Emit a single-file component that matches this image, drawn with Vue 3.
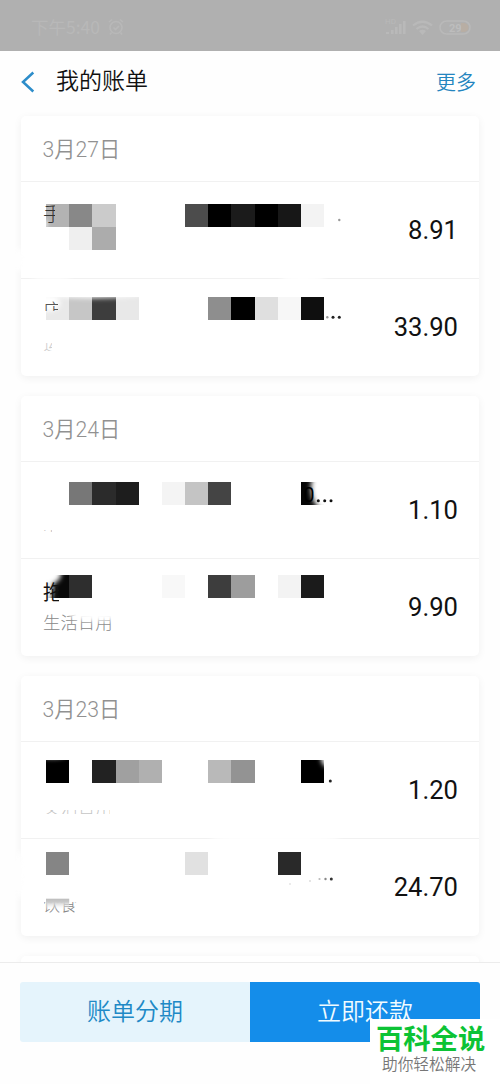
<script setup>
const C = 23.2
// Each tile: [x, y, shade]; coordinates share the page grid of the list.
const groups = [
  {
    date: '3月27日',
    rows: [
      {
        y: 181, amount: '8.91',
        tiles: [[46, 204, '#b3b3b3'], [69.2, 204, '#888'], [92.4, 204, '#cbcbcb'], [69.2, 227, '#efefef'], [92.4, 227, '#acacac'],
          [185, 204, '#4c4c4c'], [208.2, 204, '#000'], [231.4, 204, '#1b1b1b'], [254.6, 204, '#000'], [277.8, 204, '#171717'], [300.8, 204, '#f3f3f3']],
        fades: [[19, 260, 6, 12, '#fefefe'], [44, 224, 3, 4, '#fff']],
        dots: [[339.3, 220, 1.2, '#999']],
        texts: [{ t: '手', x: 43, y: 222, s: 20, c: '#333', clip: [43, 203, 12, 21] }],
      },
      {
        y: 278, amount: '33.90',
        tiles: [[46, 296.5, '#e9e9e9'], [69.2, 296.5, '#c6c6c6'], [92.4, 296.5, '#3d3d3d'], [115.6, 296.5, '#e8e8e8'],
          [208.2, 296.5, '#8e8e8e'], [231.4, 296.5, '#000'], [254.6, 296.5, '#dfdfdf'], [277.8, 296.5, '#f7f7f7'], [300.8, 296.5, '#0f0f0f']],
        fades: [[48, 303, 12, 8, '#fff'], [93, 293, 50, 5, '#fff'], [303, 277, 22, 5, '#fff'], [52, 277, 20, 3, '#fff']],
        dots: [[327.3, 317.3, 1.2, '#999'], [333, 317.3, 1.5, '#222'], [339.3, 317.3, 1.5, '#222']],
        texts: [{ t: '店', x: 43, y: 319, s: 20, c: '#555', clip: [43, 301, 15, 10] }, { t: '运', x: 43, y: 350, s: 17, c: '#ccc', clip: [43, 343, 9, 8] }],
      },
    ],
  },
  {
    date: '3月24日',
    rows: [
      {
        y: 461, amount: '1.10',
        tiles: [[69.2, 481.7, '#777'], [92.4, 481.7, '#2b2b2b'], [115.6, 481.7, '#1d1d1d'], [162, 481.7, '#f4f4f4'], [185, 481.7, '#c4c4c4'], [208.2, 481.7, '#444'], [300.8, 481.7, '#050505']],
        fades: [[325, 488, 14, 22, '#fff']],
        dots: [[318.3, 500.7, 1.5, '#111'], [324.7, 500.7, 1.5, '#111'], [331, 500.7, 1.5, '#111']],
        texts: [{ t: '0', x: 303.3, y: 501.5, s: 20, c: '#000', w: 400 }, { t: '生', x: 43, y: 538, s: 17, c: '#bbb', clip: [43, 530, 9, 2] }],
      },
      {
        y: 558, amount: '9.90',
        tiles: [[46, 574.5, '#090909'], [69.2, 574.5, '#2e2e2e'], [162, 574.5, '#f8f8f8'], [208.2, 574.5, '#3d3d3d'], [231.4, 574.5, '#9d9d9d'], [277.8, 574.5, '#f3f3f3'], [300.8, 574.5, '#1b1b1b']],
        fades: [[46, 574, 15, 11, '#fff'], [45, 590, 8, 14, '#fff']],
        under: { t: '生活日用', x: 43, y: 629, s: 17.4, c: '#888' },
        underFade: [97, 614, 28, 7],
        texts: [{ t: '拖', x: 43, y: 600, s: 20, c: '#111', w: 400, clip: [43, 580, 16, 23] }],
      },
    ],
  },
  {
    date: '3月23日',
    rows: [
      {
        y: 741, amount: '1.20',
        tiles: [[46, 759.5, '#000'], [92.4, 759.5, '#222'], [115.6, 759.5, '#a0a0a0'], [138.8, 759.5, '#b0b0b0'], [208.2, 759.5, '#b9b9b9'], [231.4, 759.5, '#939393'], [300.8, 759.5, '#000']],
        fades: [[328, 758, 7, 9, '#fff'], [52, 755, 14, 3, '#fff']],
        dots: [[330.3, 781, 1.5, '#222']],
        texts: [{ t: '文活日用', x: 43, y: 813.5, s: 17.4, c: '#c5c5c5', clip: [43, 810, 67, 4] }],
      },
      {
        y: 838, amount: '24.70',
        tiles: [[46, 852.2, '#858585'], [185, 852.2, '#e1e1e1'], [277.8, 852.2, '#292929']],
        half: true,
        fades: [[275, 839, 65, 5, '#fff'], [19, 875, 6, 24, '#fefefe']],
        dots: [[290, 884, 1, '#e4e4e4'], [310, 881, 1, '#ddd'], [319.5, 879, 1.1, '#bbb'], [325.5, 879, 1.2, '#888'], [331.3, 879, 1.5, '#333']],
        texts: [{ t: '饮食', x: 43, y: 911, s: 17, c: '#888', clip: [44, 902, 33, 11] }],
      },
    ],
  },
]
</script>

<template>
  <div class="screen">
    <div class="status">
      <span class="time">下午5:40</span>
      <svg class="alarm" viewBox="0 0 18 18"><circle cx="9" cy="9.5" r="6" /><path d="M6.5 9.5l2 2 3.5-3.5M2 4l3-2.5M16 4l-3-2.5M4.5 14.5L3 16.500M13.500 14.500L15 16.500" /></svg>
      <svg class="signals" viewBox="0 0 88 20">
        <text x="0" y="7" font-size="8">HD</text>
        <path class="solid" d="M1 17h3v-2H1zM6 17h2.500v-4H6zM10 17h2.500V10H10zM14 17h2.500V7H14zM18 17h2.500V4H18z" />
        <path class="wave" d="M28 8.500Q37.500 1 47 8.500M31.500 12Q37.500 7 43.500 12" /><path class="solid" d="M34 14q3.500-2.500 7 0l-3.500 4z" />
        <rect x="55" y="4" width="30" height="13" rx="6.500" />
        <path class="charge" d="M76 6h3.500q4 1 4 4.500t-4 4.500H76z" />
        <text class="pct" x="64" y="15" font-size="11">29</text>
      </svg>
    </div>

    <header class="bar">
      <svg class="back" viewBox="0 0 14 22"><path d="M12.300 1.500L2 11l10.300 9.500" /></svg>
      <h1>我的账单</h1>
      <a class="more">更多</a>
    </header>

    <main class="list">
      <section v-for="g in groups" :key="g.date" class="card">
        <h2>{{ g.date }}</h2>
        <div v-for="r in g.rows" :key="r.y" class="row">
          <svg class="mosaic" :viewBox="`21 ${r.y} 458 97`">
            <defs>
              <filter :id="'soft' + r.y" x="-100%" y="-200%" width="300%" height="500%"><feGaussianBlur stdDeviation="2.500" /></filter>
              <linearGradient id="fadeDown" x1="0" y1="0" x2="0" y2="1"><stop offset="0" stop-color="#bdbdbd" /><stop offset=".3" stop-color="#cacaca" /><stop offset="1" stop-color="#fff" stop-opacity="0" /></linearGradient>
              <clipPath v-for="(t, i) in r.texts" :id="`c${r.y}-${i}`" :key="i">
                <rect v-if="t.clip" :x="t.clip[0]" :y="t.clip[1]" :width="t.clip[2]" :height="t.clip[3]" />
                <rect v-else :x="t.x" :y="t.y - 25" width="60" height="40" />
              </clipPath>
            </defs>
            <rect v-for="(t, i) in r.tiles" :key="'t' + i" :x="t[0]" :y="t[1]" :width="C" :height="C" :fill="t[2]" shape-rendering="crispEdges" />
            <text v-if="r.under" :x="r.under.x" :y="r.under.y" :font-size="r.under.s" :fill="r.under.c">{{ r.under.t }}</text>
            <ellipse v-if="r.underFade" :cx="r.underFade[0]" :cy="r.underFade[1]" :rx="r.underFade[2]" :ry="r.underFade[3]" fill="#fff" :filter="`url(#soft${r.y})`" />
            <ellipse v-for="(f, i) in r.fades" :key="'f' + i" :cx="f[0]" :cy="f[1]" :rx="f[2]" :ry="f[3]" :fill="f[4]" :filter="`url(#soft${r.y})`" />
            <text v-for="(t, i) in r.texts" :key="'x' + i" :x="t.x" :y="t.y" :font-size="t.s" :font-weight="t.w || 300" :fill="t.c" :clip-path="`url(#c${r.y}-${i})`">{{ t.t }}</text>
            <rect v-if="r.half" x="46" y="898.700" :width="C" height="11" fill="url(#fadeDown)" />
            <circle v-for="(d, i) in r.dots" :key="'d' + i" :cx="d[0]" :cy="d[1]" :r="d[2]" :fill="d[3]" />
          </svg>
          <span class="amount">{{ r.amount }}</span>
        </div>
      </section>
      <section class="card next"></section>
    </main>

    <footer class="actions">
      <button class="split">账单分期</button>
      <button class="pay">立即还款</button>
    </footer>

    <div class="stamp">
      <strong>百科全说</strong>
      <span>助你轻松解决</span>
    </div>
  </div>
</template>

<style>
body { background: #fefefe; }
</style>

<style scoped>
.screen {
  position: relative;
  display: flex;
  flex-direction: column;
  width: 500px;
  height: 1084px;
  overflow: hidden;
  background: #fefefe;
  font-family: Roboto, "Noto Sans CJK SC", sans-serif;
  font-weight: 300;
}
.status {
  flex: none;
  box-sizing: border-box;
  display: flex;
  align-items: center;
  height: 51px;
  padding: 3px 27px 0 31px;
  background: #b0b0b0;
  color: #b8b8b8;
  font-weight: 400;
}
.time { font-family: "Noto Sans CJK SC", sans-serif; font-size: 17.5px; line-height: 20px; }
.alarm { width: 18px; height: 18px; margin-left: 7px; fill: none; stroke: #b8b8b8; stroke-width: 1.6; }
.signals { width: 88px; height: 20px; margin-left: auto; fill: none; stroke: #b9b9b9; stroke-width: 1.6; }
.signals text, .signals .solid { fill: #b9b9b9; stroke: none; }
.signals .wave { stroke-width: 2.2; }
.signals .charge { fill: #b8aea4; stroke: none; }
.signals .pct { fill: #bdbdbd; font-weight: 700; }
.bar {
  flex: none;
  display: flex;
  align-items: center;
  height: 61px;
  padding: 0 24px 0 21px;
}
.back { width: 14px; height: 22px; fill: none; stroke: #2d8dca; stroke-width: 2.5; }
h1 { margin: 1px 0 0 21px; font-size: 23px; font-weight: 350; line-height: 30px; color: #111; }
.more { margin-left: auto; font-size: 20px; font-weight: 350; color: #2485bf; }
.list {
  flex: none;
  display: flex;
  flex-direction: column;
  gap: 20px;
  height: 850px;
  padding: 4px 21px 0;
  box-sizing: border-box;
  overflow: hidden;
}
.card {
  flex: none;
  border-radius: 5px;
  background: #fff;
  box-shadow: 0 2px 8px rgba(0, 0, 0, .06);
}
.next { height: 60px; }
h2 {
  margin: 0;
  height: 65px;
  line-height: 68px;
  padding-left: 21.5px;
  font-size: 21.2px;
  font-weight: 350;
  color: #919191;
}
.row {
  position: relative;
  box-sizing: border-box;
  display: flex;
  align-items: center;
  justify-content: flex-end;
  height: 97px;
  padding-right: 21px;
  border-top: 1px solid #f1f1f1;
}
.row:last-child { height: 98px; padding-bottom: 2px; }
.mosaic { position: absolute; left: 0; top: -1px; width: 458px; height: 97px; overflow: visible; }
.amount { font-size: 25.6px; font-weight: 400; line-height: 30px; color: #111; }
.actions {
  flex: none;
  display: flex;
  height: 60px;
  padding: 19px 20px 42px;
  border-top: 1px solid #ececec;
}
button {
  flex: 1;
  border: 0;
  padding: 1px 0 0;
  font: 350 24px/59px Roboto, "Noto Sans CJK SC", sans-serif;
}
.split { border-radius: 3px 0 0 3px; background: #e5f4fc; color: #2089c6; }
.pay { border-radius: 0 3px 3px 0; background: #148dea; color: #f0fbff; }
.stamp {
  position: absolute;
  left: 370px;
  top: 1019px;
  box-sizing: border-box;
  display: flex;
  flex-direction: column;
  width: 130px;
  height: 65px;
  padding: 6px 0 0 6px;
  background: #fff;
  white-space: nowrap;
}
.stamp strong { font-size: 27.3px; font-weight: 700; line-height: 31px; color: #0cc335; }
.stamp span { margin-left: 6px; font-size: 15.7px; font-weight: 350; line-height: 17px; color: #777; }
</style>
